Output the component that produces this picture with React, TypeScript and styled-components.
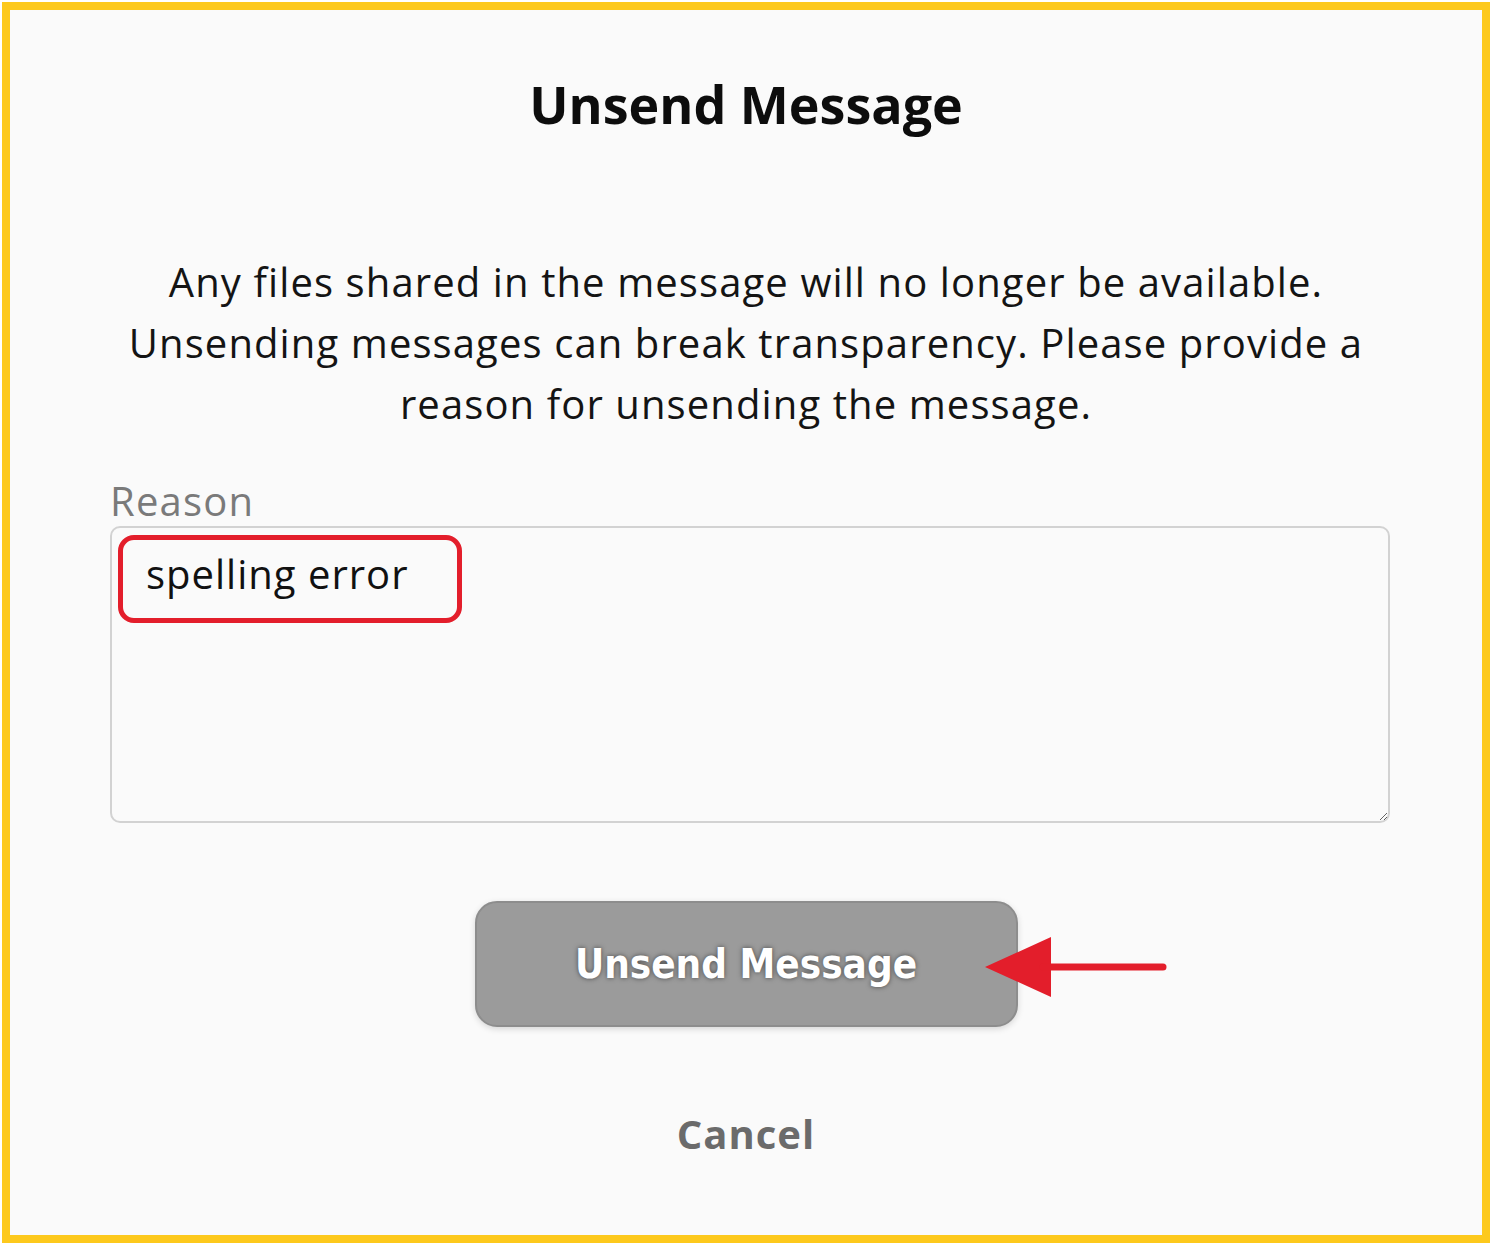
import React from 'react';
import styled, { createGlobalStyle } from 'styled-components';

const GlobalStyle = createGlobalStyle`
  html, body {
    margin: 0;
    padding: 0;
    background: #ffffff;
  }
  body {
    font-family: "Open Sans", Lato, sans-serif;
  }
`;

const Frame = styled.div`
  box-sizing: border-box;
  width: 1488px;
  height: 1241px;
  margin: 2px;
  border: 8px solid #fdc91d;
  background: #fafafa;
  display: flex;
  flex-direction: column;
  align-items: center;
  color: #111;
`;

const Title = styled.h1`
  margin: 60px 0 0;
  font-size: 52px;
  line-height: 68px;
  font-weight: 700;
  color: #0d0d0d;
`;

const Body = styled.p`
  margin: 113px 0 0;
  font-size: 40px;
  line-height: 61px;
  letter-spacing: 1.1px;
  text-align: center;
  color: #141414;
`;

const Field = styled.div`
  align-self: stretch;
  margin: 44px 92px 0 100px;
  display: flex;
  flex-direction: column;
  gap: 2px;
`;

const Label = styled.label`
  font-size: 40px;
  line-height: 46px;
  letter-spacing: 1.2px;
  color: #7a7a7a;
`;

const TextBox = styled.div`
  position: relative;
`;

const Input = styled.textarea`
  box-sizing: border-box;
  display: block;
  width: 100%;
  height: 297px;
  padding: 21px 34px 16px;
  border: 2px solid #d2d2d2;
  border-radius: 10px;
  background: #fafafa;
  font-family: "Open Sans", Lato, sans-serif;
  font-size: 40px;
  line-height: 50px;
  letter-spacing: 1px;
  color: #111;
  outline: none;
`;

const Highlight = styled.div`
  position: absolute;
  left: 8px;
  top: 9px;
  width: 344px;
  height: 88px;
  box-sizing: border-box;
  border: 5px solid #e31e2b;
  border-radius: 16px;
  pointer-events: none;
`;

const ButtonRow = styled.div`
  position: relative;
  margin-top: 78px;
`;

const PrimaryButton = styled.button`
  box-sizing: border-box;
  width: 543px;
  height: 126px;
  border: 2px solid #8d8d8d;
  border-radius: 22px;
  background: #9b9b9b;
  box-shadow: 0 2px 6px rgba(0, 0, 0, 0.15);
  color: #ffffff;
  font-family: "DejaVu Sans Condensed", "DejaVu Sans", sans-serif;
  font-size: 40px;
  font-weight: 700;
  text-shadow: 0 0 5px rgba(0, 0, 0, 0.55);
  cursor: pointer;
`;

const Arrow = styled.svg`
  position: absolute;
  left: 508px;
  top: 34px;
`;

const CancelButton = styled.button`
  margin-top: 78px;
  border: none;
  background: none;
  font-family: "Open Sans", Lato, sans-serif;
  font-size: 40px;
  font-weight: 700;
  letter-spacing: 1px;
  color: #6b6b6b;
  cursor: pointer;
`;

export default function App() {
  return (
    <>
      <GlobalStyle />
      <Frame>
        <Title>Unsend Message</Title>
        <Body>
          Any files shared in the message will no longer be available.
          <br />
          Unsending messages can break transparency. Please provide a
          <br />
          reason for unsending the message.
        </Body>
        <Field>
          <Label htmlFor="reason">Reason</Label>
          <TextBox>
            <Input id="reason" defaultValue="spelling error" />
            <Highlight />
          </TextBox>
        </Field>
        <ButtonRow>
          <PrimaryButton>Unsend Message</PrimaryButton>
          <Arrow width="186" height="64" viewBox="0 0 186 64">
            <path d="M2 32 L68 2 L68 62 Z" fill="#e31e2b" />
            <line x1="60" y1="32" x2="180" y2="32" stroke="#e31e2b" strokeWidth="7" strokeLinecap="round" />
          </Arrow>
        </ButtonRow>
        <CancelButton>Cancel</CancelButton>
      </Frame>
    </>
  );
}
